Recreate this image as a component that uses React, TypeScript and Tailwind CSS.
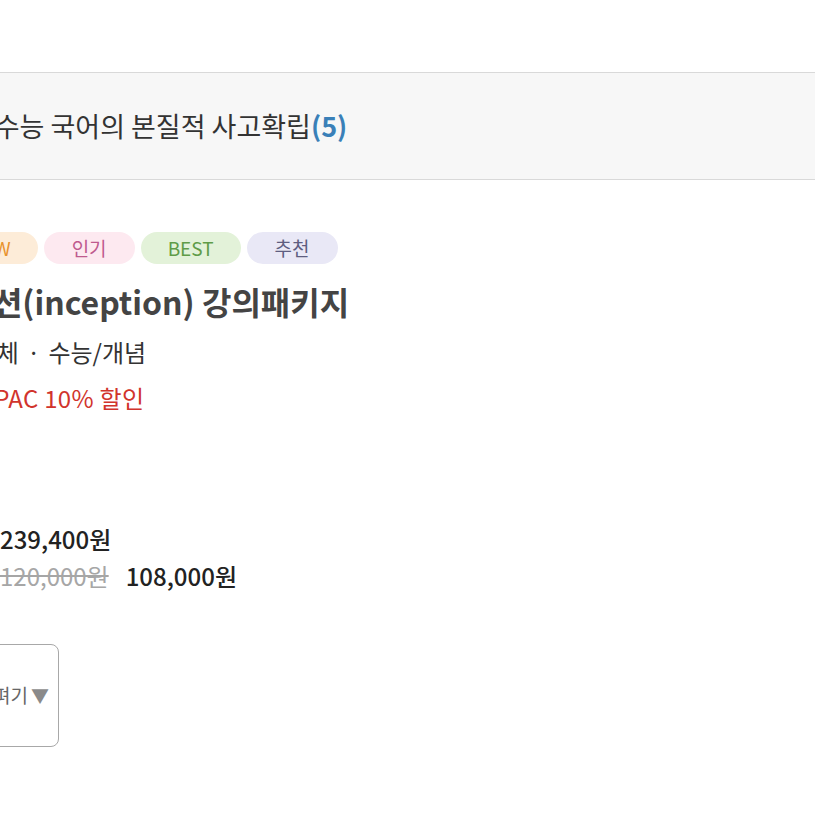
import React from 'react';

const badges = [
  { label: 'NEW', cls: 'bg-[#fdecd8] text-[#e8922e]' },
  { label: '인기', cls: 'bg-[#fde9f0] text-[#bf5a8e]' },
  { label: 'BEST', cls: 'bg-[#e3f2d9] text-[#5f9c48]' },
  { label: '추천', cls: 'bg-[#e9e8f6] text-[#5e5d80]' },
];

export default function App() {
  return (
    <div
      className="w-[815px] h-[815px] overflow-hidden bg-white text-[#333]"
      style={{ fontFamily: '"Noto Sans CJK KR", "Noto Sans", sans-serif' }}
    >
      <div className="h-[72px]" />

      {/* 카테고리 헤더 */}
      <div className="h-[108px] border-y border-[#d9d9d9] bg-[#f7f7f7] flex items-center">
        <h2 className="-ml-[61px] text-[27px] leading-[34px] text-[#333] whitespace-nowrap">
          국어 수능 국어의 본질적 사고확립<span className="font-bold text-[#3a80b8]">(5)</span>
        </h2>
      </div>

      {/* 상품 정보 */}
      <div className="-ml-[56px] pt-[52px] flex flex-col items-start">
        <div className="-ml-[2px] flex gap-[6px]">
          {badges.map((b) => (
            <span
              key={b.label}
              className={`h-[32px] min-w-[91px] px-[27px] rounded-full flex items-center justify-center text-[19px] ${b.cls}`}
            >
              {b.label}
            </span>
          ))}
        </div>

        <h3 className="mt-[17px] -ml-[10px] text-[32px] leading-[40px] font-bold text-[#444] whitespace-nowrap">
          인셉션(inception) 강의패키지
        </h3>
        <p className="mt-[15px] -ml-[10px] text-[24px] leading-[32px] text-[#333] whitespace-nowrap">
          고3 전체<span className="mx-[8px]">·</span>수능/개념
        </p>
        <p className="mt-[14px] -ml-[17px] text-[24px] leading-[32px] tracking-[0.3px] text-[#d1342c] whitespace-nowrap">
          인셉션PAC 10% 할인
        </p>

        <div className="mt-[109px] grid grid-cols-[56px_auto] gap-y-[5px] text-[24px] leading-[32px] text-[#222] whitespace-nowrap">
          <span className="text-[#777]">정가</span>
          <span className="font-medium">239,400원</span>
          <span className="text-[#777]">판매</span>
          <span className="flex gap-[17px]">
            <span className="line-through text-[#a6a6a6]">120,000원</span>
            <span className="font-medium">108,000원</span>
          </span>
        </div>

        <button className="mt-[52px] w-[115px] h-[103px] rounded-[8px] border-[1.5px] border-[#a8a8a8] bg-white flex items-center justify-center text-[19px] text-[#666] whitespace-nowrap">
          강좌 펴기<span className="ml-[3px] text-[#8a8a8a] text-[18px]">▼</span>
        </button>
      </div>
    </div>
  );
}
